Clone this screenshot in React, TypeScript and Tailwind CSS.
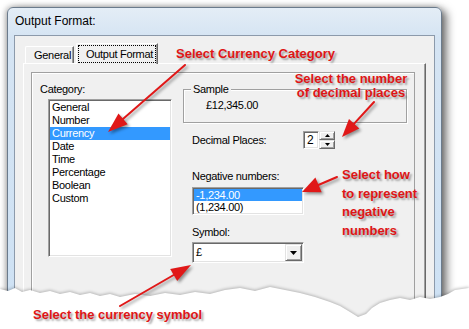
const sunken =
  "border border-t-[#a0a0a0] border-l-[#a0a0a0] border-b-white border-r-white shadow-[inset_1px_1px_0_#696969,inset_-1px_-1px_0_#e3e3e3]";
const raised =
  "border border-t-[#e3e3e3] border-l-[#e3e3e3] border-b-[#696969] border-r-[#696969] shadow-[inset_1px_1px_0_#ffffff,inset_-1px_-1px_0_#a0a0a0]";

const categories = ["General", "Number", "Currency", "Date", "Time", "Percentage", "Boolean", "Custom"];

function Arrow({ x1, y1, x2, y2, len = 20, hw = 7 }: { x1: number; y1: number; x2: number; y2: number; len?: number; hw?: number }) {
  const dx = x2 - x1;
  const dy = y2 - y1;
  const d = Math.hypot(dx, dy);
  const ux = dx / d;
  const uy = dy / d;
  const bx = x2 - ux * len;
  const by = y2 - uy * len;
  const nx = -uy;
  const ny = ux;
  const pts = `${x2},${y2} ${bx + nx * hw},${by + ny * hw} ${bx - nx * hw},${by - ny * hw}`;
  return (
    <g>
      <line x1={x1} y1={y1} x2={bx + ux * 4} y2={by + uy * 4} stroke="#e01818" strokeWidth={2} strokeLinecap="round" />
      <polygon points={pts} fill="#e01818" />
    </g>
  );
}

const tear =
  "0,289 8,291 15,288 22,292 30,290 40,293 50,291 60,294 70,292 80,295 90,293 100,296 110,294 120,297 135,294 150,296 165,293 180,295 195,292 210,294 225,290 240,288 255,291 270,287 285,290 300,293 315,297 330,302 340,306 350,312 358,317 366,314 372,308 380,303 390,300 400,298 410,300 420,297 430,299 440,297 448,294 455,290 469,288 469,329 0,329";

export default function App() {
  return (
    <div className="relative w-[469px] h-[329px] overflow-hidden bg-white font-[family-name:'Liberation_Sans',Arial,sans-serif] text-black text-[11px] leading-[13px] tracking-[-0.3px]">
      {/* Window */}
      <div className="ml-[7px] mt-[7px] w-[435px] h-[330px] rounded-t-[6px] border border-[#6b7b8c] bg-[linear-gradient(to_bottom,#e4edf6,#d5e4f3_30px,#cde1f4)] shadow-[-1px_0_6px_rgba(0,0,0,0.35),5px_3px_9px_rgba(0,0,0,0.5)]">
        <div className="h-[27px] shrink-0 flex items-center pl-[7px] text-[12px] tracking-normal">Output Format:</div>
        <div className="mx-[6px] h-[300px] overflow-hidden border border-[#8c9aab] bg-[#f0f0f0] pt-[7px] px-[8px]">
          {/* tabs */}
          <div className="flex items-end pl-[2px] h-[20px]">
            <div className="w-[49px] h-[17px] border-t border-l border-t-white border-l-white border-r border-r-[#696969] shadow-[inset_-1px_0_0_#a0a0a0] rounded-tl-[2px] pl-[8px] flex items-center">
              General
            </div>
            <div className="relative z-10 ml-[2px] w-[82px] h-[21px] -mb-[1px] bg-[#f0f0f0] border-t border-l border-t-white border-l-white border-r border-r-[#696969] shadow-[inset_-1px_0_0_#a0a0a0] rounded-tl-[2px] p-[1px]">
              <div className="h-[18px] border border-dotted border-black flex items-center pl-[7px]">Output Format</div>
            </div>
          </div>
          {/* tab panel */}
          <div className="h-[300px] border-t border-l border-t-white border-l-white border-r border-r-[#696969] shadow-[inset_-1px_0_0_#a0a0a0] pl-[7px] pt-[8px]">
            <div className="w-[384px] h-[300px] border border-[#a0a0a0] shadow-[inset_1px_1px_0_#ffffff] flex">
              {/* left column */}
              <div className="pl-[8px] w-[140px] shrink-0">
                <div className="mt-[10px]">Category:</div>
                <div className={`ml-[8px] mt-[3px] w-[124px] h-[158px] bg-white p-[1px] ${sunken}`}>
                  {categories.map((c) => (
                    <div
                      key={c}
                      className={`h-[13px] pl-[2px] ${c === "Currency" ? "bg-[#3399ff] text-white" : ""}`}
                    >
                      {c}
                    </div>
                  ))}
                </div>
              </div>
              {/* right column */}
              <div className="ml-[11px] flex flex-col">
                <div className="mt-[16px] w-[224px] h-[34px] shrink-0 border border-[#a0a0a0] shadow-[inset_1px_1px_0_#ffffff,1px_1px_0_#ffffff]">
                  <div className="-mt-[7px] ml-[7px] px-[2px] w-fit bg-[#f0f0f0]">Sample</div>
                  <div className="mt-[3px] ml-[22px]">£12,345.00</div>
                </div>
                <div className="mt-[8px] h-[18px] shrink-0 flex items-center">
                  <div className="ml-[9px] w-[111px]">Decimal Places:</div>
                  <div className={`w-[16px] h-[18px] bg-white pl-[3px] flex items-center text-[12px] ${sunken}`}>2</div>
                  <div className="w-[16px] h-[18px] flex flex-col">
                    <div className={`h-[9px] bg-[#f0f0f0] flex items-center justify-center ${raised}`}>
                      <svg width="5" height="3" viewBox="0 0 5 3">
                        <polygon points="2.5,0 5,3 0,3" fill="#000" />
                      </svg>
                    </div>
                    <div className={`h-[9px] bg-[#f0f0f0] flex items-center justify-center ${raised}`}>
                      <svg width="5" height="3" viewBox="0 0 5 3">
                        <polygon points="0,0 5,0 2.5,3" fill="#000" />
                      </svg>
                    </div>
                  </div>
                </div>
                <div className="mt-[21px] ml-[9px]">Negative numbers:</div>
                <div className={`mt-[4px] ml-[9px] w-[112px] h-[28px] shrink-0 bg-white p-[1px] overflow-hidden ${sunken}`}>
                  <div className="h-[12px] pl-[2px] bg-[#3399ff] text-white leading-[12px]">-1,234.00</div>
                  <div className="h-[13px] pl-[2px]">(1,234.00)</div>
                </div>
                <div className="mt-[11px] ml-[9px]">Symbol:</div>
                <div className={`mt-[3px] ml-[9px] w-[112px] h-[21px] shrink-0 bg-white p-[1px] flex ${sunken}`}>
                  <div className="flex-1 pl-[2px] flex items-center">£</div>
                  <div className={`w-[17px] h-[17px] bg-[#f0f0f0] flex items-center justify-center ${raised}`}>
                    <svg width="7" height="4" viewBox="0 0 7 4">
                      <polygon points="0,0 7,0 3.5,4" fill="#000" />
                    </svg>
                  </div>
                </div>
              </div>
            </div>
          </div>
        </div>
      </div>

      {/* torn edge */}
      <svg className="absolute inset-0 drop-shadow-[0_-1px_1.5px_rgba(0,0,0,0.25)]" width="469" height="329" viewBox="0 0 469 329">
        <polygon points={tear} fill="#ffffff" />
      </svg>

      {/* arrows */}
      <svg className="absolute inset-0 drop-shadow-[2px_2px_1.5px_rgba(0,0,0,0.4)]" width="469" height="329" viewBox="0 0 469 329">
        <Arrow x1={185} y1={65} x2={108} y2={132} len={20} hw={7} />
        <Arrow x1={374} y1={102} x2={342} y2={137} len={18} hw={7} />
        <Arrow x1={337} y1={177} x2={302} y2={192} len={18} hw={8} />
        <Arrow x1={120} y1={306} x2={191} y2={265} len={20} hw={7} />
      </svg>

      {/* annotations */}
      <div className="absolute left-[176px] top-[46px] text-[13px] leading-[15px] tracking-normal font-bold text-[#df1515] [text-shadow:2px_2px_2px_rgba(0,0,0,0.35)] whitespace-nowrap">
        Select Currency Category
      </div>
      <div className="absolute left-[293px] top-[72px] w-[116px] text-center text-[13px] leading-[14px] tracking-normal font-bold text-[#df1515] [text-shadow:2px_2px_2px_rgba(0,0,0,0.35)] whitespace-nowrap">
        <div>Select the number</div>
        <div>of decimal places</div>
      </div>
      <div className="absolute left-[342px] top-[166px] text-[13px] leading-[18.5px] tracking-normal font-bold text-[#df1515] [text-shadow:2px_2px_2px_rgba(0,0,0,0.35)] whitespace-nowrap">
        <div>Select how</div>
        <div>to represent</div>
        <div>negative</div>
        <div>numbers</div>
      </div>
      <div className="absolute left-[33px] top-[307px] text-[13px] leading-[15px] tracking-normal font-bold text-[#df1515] [text-shadow:2px_2px_2px_rgba(0,0,0,0.35)] whitespace-nowrap">
        Select the currency symbol
      </div>
    </div>
  );
}
